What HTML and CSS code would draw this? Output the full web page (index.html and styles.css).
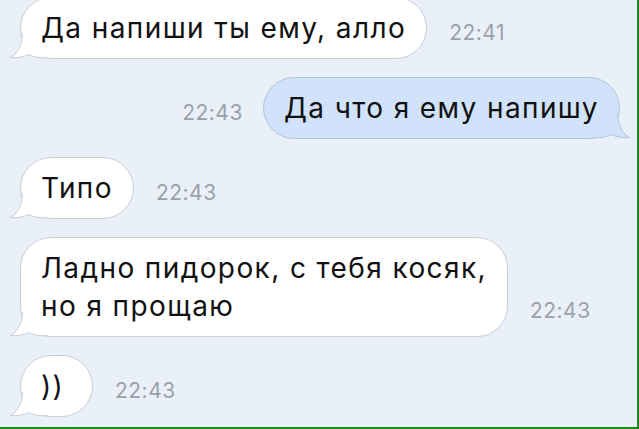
FILE: index.html
```html
<!DOCTYPE html>
<html lang="ru">
<head>
  <meta charset="UTF-8">
  <title>Чат</title>
  <link rel="stylesheet" href="styles.css">
</head>
<body>
  <div class="frame">
    <div class="chat">
      <div class="row in">
        <div class="bubble">Да напиши ты ему, алло
          <svg class="tail" width="40" height="30" viewBox="0 0 40 30"><path d="M13.5 5 C13 17, 8 25, 1.5 28.5 C8 29.2, 15 27.8, 20 25.5 C24 27.8, 30 29.2, 38 28.6"/></svg>
        </div>
        <span class="time">22:41</span>
      </div>

      <div class="row out">
        <span class="time">22:43</span>
        <div class="bubble">Да что я ему напишу
          <svg class="tail" width="40" height="30" viewBox="0 0 40 30"><path d="M13.5 5 C13 17, 8 25, 1.5 28.5 C8 29.2, 15 27.8, 20 25.5 C24 27.8, 30 29.2, 38 28.6"/></svg>
        </div>
      </div>

      <div class="row in">
        <div class="bubble">Типо
          <svg class="tail" width="40" height="30" viewBox="0 0 40 30"><path d="M13.5 5 C13 17, 8 25, 1.5 28.5 C8 29.2, 15 27.8, 20 25.5 C24 27.8, 30 29.2, 38 28.6"/></svg>
        </div>
        <span class="time">22:43</span>
      </div>

      <div class="row in">
        <div class="bubble">Ладно пидорок, с тебя косяк,<br>но я прощаю
          <svg class="tail" width="40" height="30" viewBox="0 0 40 30"><path d="M13.5 5 C13 17, 8 25, 1.5 28.5 C8 29.2, 15 27.8, 20 25.5 C24 27.8, 30 29.2, 38 28.6"/></svg>
        </div>
        <span class="time">22:43</span>
      </div>

      <div class="row in">
        <div class="bubble">))
          <svg class="tail" width="40" height="30" viewBox="0 0 40 30"><path d="M13.5 5 C13 17, 8 25, 1.5 28.5 C8 29.2, 15 27.8, 20 25.5 C24 27.8, 30 29.2, 38 28.6"/></svg>
        </div>
        <span class="time">22:43</span>
      </div>
    </div>
  </div>
</body>
</html>
```

FILE: styles.css
```css
body {
  margin: 0;
  font-family: Inter, "Liberation Sans", Arial, sans-serif;
  background-color: #eaf0f8;
}

.frame {
  height: 429px;
  box-sizing: border-box;
  border-right: 2px solid #1b8a1b;
  border-bottom: 2px solid #1b8a1b;
  overflow: hidden;
}

.chat {
  display: flex;
  flex-direction: column;
  gap: 18px;
  margin-top: -3px;
}

.row {
  display: flex;
  align-items: flex-end;
  gap: 22px;
}

.row.in {
  padding-left: 20px;
}

.row.out {
  justify-content: flex-end;
  gap: 20px;
  padding-right: 17px;
}

.bubble {
  position: relative;
  box-sizing: border-box;
  min-width: 73px;
  padding: 11px 20px 11px 20px;
  font-size: 28px;
  line-height: 38px;
  letter-spacing: 1.4px;
  color: #111;
  background-color: #fff;
  border: 1px solid #c9ced6;
  border-radius: 31px;
}

.out .bubble {
  background-color: #d0e3fa;
  border-color: #b3c5dc;
}

.tail {
  position: absolute;
  left: -12px;
  bottom: -1px;
}

.tail path {
  fill: #fff;
  stroke: #c9ced6;
  stroke-width: 1;
}

.out .tail {
  left: auto;
  right: -12px;
  transform: scaleX(-1);
}

.out .tail path {
  fill: #d0e3fa;
  stroke: #b3c5dc;
}

.time {
  font-size: 21px;
  line-height: 22px;
  letter-spacing: 0.5px;
  color: #9ba1aa;
  margin-bottom: 15px;
}
```
